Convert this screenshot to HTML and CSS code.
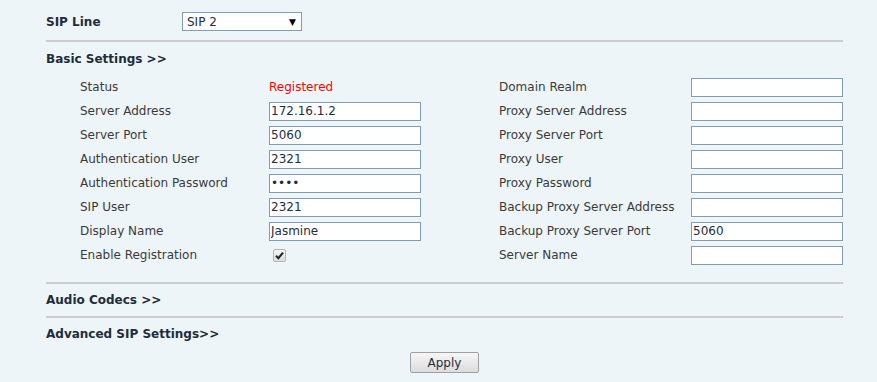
FILE: index.html
```html
<!DOCTYPE html>
<html lang="en">
<head>
    <meta charset="UTF-8">
    <title>SIP Line</title>
    <link rel="stylesheet" href="styles.css">
</head>
<body>
    <div class="page">
        <div class="line-select">
            <span class="title">SIP Line</span>
            <div class="select">
                <span>SIP 2</span>
                <span class="arrow">&#9660;</span>
            </div>
        </div>

        <div class="section">
            <div class="section-title basic">Basic Settings &gt;&gt;</div>
            <div class="grid">
                <div class="col">
                    <div class="row"><span class="label">Status</span><span class="status">Registered</span></div>
                    <div class="row"><span class="label">Server Address</span><input class="field" type="text" value="172.16.1.2"></div>
                    <div class="row"><span class="label">Server Port</span><input class="field" type="text" value="5060"></div>
                    <div class="row"><span class="label">Authentication User</span><input class="field" type="text" value="2321"></div>
                    <div class="row"><span class="label">Authentication Password</span><input class="field" type="password" value="1234"></div>
                    <div class="row"><span class="label">SIP User</span><input class="field" type="text" value="2321"></div>
                    <div class="row"><span class="label">Display Name</span><input class="field" type="text" value="Jasmine"></div>
                    <div class="row">
                        <span class="label">Enable Registration</span>
                        <span class="check">
                            <svg width="9" height="9" viewBox="0 0 9 9"><path d="M1 4.8 L3.4 7.2 L8 1.6" fill="none" stroke="#222" stroke-width="2"/></svg>
                        </span>
                    </div>
                </div>
                <div class="col">
                    <div class="row"><span class="label">Domain Realm</span><input class="field" type="text" value=""></div>
                    <div class="row"><span class="label">Proxy Server Address</span><input class="field" type="text" value=""></div>
                    <div class="row"><span class="label">Proxy Server Port</span><input class="field" type="text" value=""></div>
                    <div class="row"><span class="label">Proxy User</span><input class="field" type="text" value=""></div>
                    <div class="row"><span class="label">Proxy Password</span><input class="field" type="text" value=""></div>
                    <div class="row"><span class="label">Backup Proxy Server Address</span><input class="field" type="text" value=""></div>
                    <div class="row"><span class="label">Backup Proxy Server Port</span><input class="field" type="text" value="5060"></div>
                    <div class="row"><span class="label">Server Name</span><input class="field" type="text" value=""></div>
                </div>
            </div>
        </div>

        <div class="section">
            <div class="section-title">Audio Codecs &gt;&gt;</div>
        </div>

        <div class="section last">
            <div class="section-title">Advanced SIP Settings&gt;&gt;</div>
        </div>

        <div class="actions">
            <button class="apply">Apply</button>
        </div>
    </div>
</body>
</html>
```

FILE: styles.css
```css
html, body {
    margin: 0;
    padding: 0;
    height: 100%;
    background-color: #eef5f8;
    font-family: "DejaVu Sans", Verdana, sans-serif;
    font-size: 12px;
    color: #3a3a3a;
}
.page {
    width: 797px;
    margin-left: 46px;
    padding-top: 12px;
}
.line-select {
    display: flex;
    align-items: center;
    height: 19px;
    padding-bottom: 9px;
    border-bottom: 2px solid #cdcdcd;
}
.title, .section-title {
    font-weight: bold;
    font-size: 12px;
    color: #1e2d3c;
}
.title {
    width: 136px;
}
.select {
    box-sizing: border-box;
    width: 120px;
    height: 19px;
    border: 1px solid #7f9db9;
    background-color: #fff;
    display: flex;
    align-items: center;
    justify-content: space-between;
    padding: 0 5px 0 4px;
    color: #1e2d3c;
}
.arrow {
    font-size: 9px;
    color: #000;
}
.section {
    border-bottom: 2px solid #cdcdcd;
}
.section.last {
    border-bottom: none;
}
.section-title {
    height: 16px;
    line-height: 16px;
    padding: 8px 0 8px;
}
.section-title.basic {
    padding: 9px 0 7px;
}
.grid {
    display: grid;
    grid-template-columns: 419px 344px;
    padding: 1px 0 15px 34px;
}
.row {
    display: flex;
    align-items: center;
    height: 24px;
}
.label {
    width: 189px;
    flex: none;
}
.col + .col .label {
    width: 192px;
}
.status {
    color: #f00;
}
.field {
    box-sizing: border-box;
    width: 152px;
    height: 19px;
    margin: 0;
    padding: 0 1px;
    border: 1px solid #7f9db9;
    background-color: #fff;
    font-family: "DejaVu Sans", Verdana, sans-serif;
    font-size: 12px;
    color: #1e2d3c;
    outline: none;
}
.check {
    box-sizing: border-box;
    width: 13px;
    height: 13px;
    margin-left: 4px;
    border: 1px solid #b5b5b5;
    border-radius: 2px;
    background: linear-gradient(#f4f4f4, #dedede);
    display: flex;
    align-items: center;
    justify-content: center;
}
.actions {
    display: flex;
    justify-content: center;
    padding-top: 2px;
}
.apply {
    width: 69px;
    height: 21px;
    border: 1px solid #a0a0a0;
    border-radius: 2px;
    background: linear-gradient(#f6f6f6, #dcdcdc);
    font-family: "DejaVu Sans", Verdana, sans-serif;
    font-size: 12px;
    color: #1e2d3c;
    padding: 0;
}
```
